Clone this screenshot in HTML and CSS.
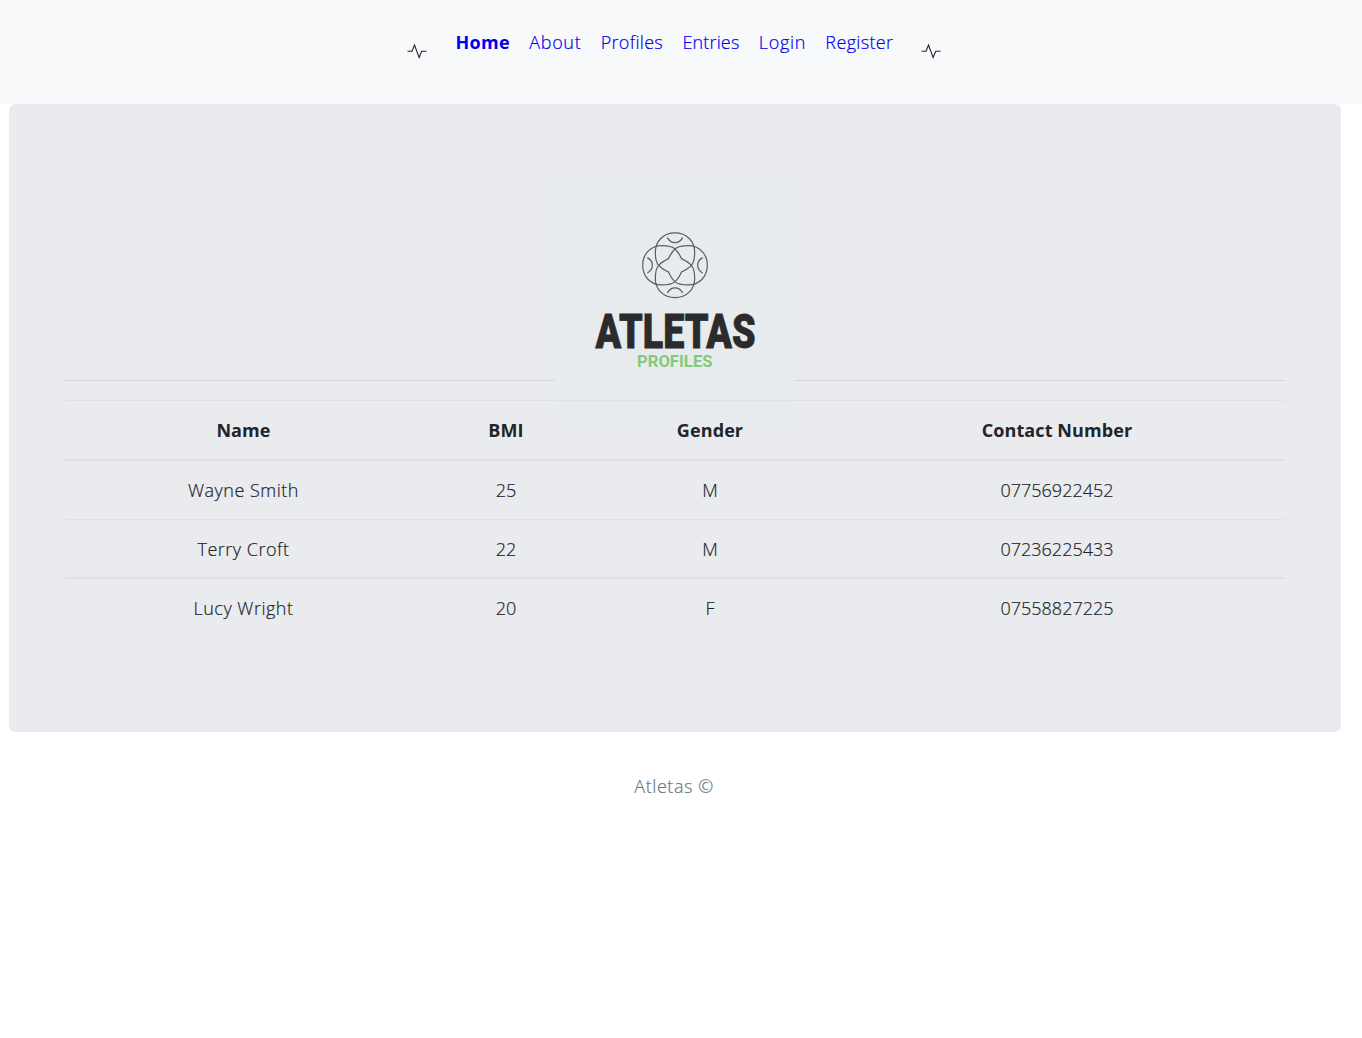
FILE: index.html
```html
<!DOCTYPE html>
<html lang="en">
<head>
<meta charset="utf-8">
<title>Atletas Profiles</title>
<link rel="stylesheet" href="styles.css">
</head>
<body>
<header class="navbar">
  <svg class="pulse" viewBox="0 0 20 18"><path d="M.5 9.3H5L7.5 3 12.1 15.5 14.7 9.3H19.5"/></svg>
  <nav class="links">
    <a class="active" href="#">Home</a>
    <a class="about" href="#">About</a>
    <a class="profiles" href="#">Profiles</a>
    <a class="entries" href="#">Entries</a>
    <a class="login" href="#">Login</a>
    <a class="register" href="#">Register</a>
  </nav>
  <svg class="pulse" viewBox="0 0 20 18"><path d="M.5 9.3H5L7.5 3 12.1 15.5 14.7 9.3H19.5"/></svg>
</header>
<main class="panel">
  <svg class="logo" viewBox="0 0 240 240">
    <defs>
      <g id="petal">
        <path d="M-97 0C-97-35-72-59-40-59C-20-59-8-57 0-49C10-40 14-32 20-19"/>
        <path d="M-97 0C-97 35-72 59-40 59C-20 59-8 57 0 49C10 40 14 32 20 19"/>
        <path d="M-83-23Q-68-15-68 0Q-68 15-83 23"/>
      </g>
    </defs>
    <g class="emblem" transform="translate(120 85.3) scale(.3333)">
      <use href="#petal"/>
      <use href="#petal" transform="rotate(90)"/>
      <use href="#petal" transform="rotate(180)"/>
      <use href="#petal" transform="rotate(270)"/>
    </g>
    <text class="brand" x="40.5" y="167.5" textLength="160" lengthAdjust="spacingAndGlyphs">ATLETAS</text>
    <text class="tagline" x="82" y="187" textLength="75.5" lengthAdjust="spacingAndGlyphs">PROFILES</text>
  </svg>
  <hr class="divider">
  <table class="profiles-table">
    <colgroup><col class="c-name"><col class="c-bmi"><col class="c-gender"><col class="c-phone"></colgroup>
    <thead>
      <tr><th>Name</th><th>BMI</th><th>Gender</th><th>Contact Number</th></tr>
    </thead>
    <tbody>
      <tr><td class="person">Wayne Smith</td><td>25</td><td>M</td><td>07756922452</td></tr>
      <tr><td class="person">Terry Croft</td><td>22</td><td>M</td><td>07236225433</td></tr>
      <tr><td class="person">Lucy Wright</td><td>20</td><td>F</td><td>07558827225</td></tr>
    </tbody>
  </table>
</main>
<footer class="footer">Atletas ©</footer>
</body>
</html>
```
FILE: styles.css
```css
* { box-sizing: border-box; }
body {
  margin: 0;
  background: #fff;
  color: #212529;
  font: 300 18px/28px "Open Sans", "Noto Sans", sans-serif;
  -webkit-text-stroke: .2px;
}
.navbar {
  display: flex;
  height: 104px;
  padding: 28px 0 0 407px;
  background: #f8f9fb;
}
.pulse {
  width: 20px;
  height: 18px;
  margin-top: 14px;
  fill: none;
  stroke: #212529;
  stroke-width: 1.1;
}
.links {
  display: flex;
  width: 438px;
  margin: 0 27.5px 0 28.5px;
  justify-content: space-between;
}
.links a { color: #0000ee; text-decoration: none; white-space: nowrap; }
.links .active { font-weight: 700; letter-spacing: .3px; }
.links .about { letter-spacing: .65px; }
.links .profiles { letter-spacing: .3px; }
.links .entries { letter-spacing: .15px; }
.links .login { letter-spacing: .65px; }
.links .register { letter-spacing: .35px; }
.links .active, .profiles-table th, .logo { -webkit-text-stroke: 0; }
.panel {
  width: 1332px;
  height: 628px;
  margin-left: 9px;
  padding: 76px 57px 0 56px;
  border-radius: 6px;
  background: #eaebef;
}
.logo {
  position: relative;
  z-index: 1;
  display: block;
  width: 240px;
  height: 240px;
  margin: 0 auto -40px;
  border-radius: 4px;
  background: #e8ebee;
  overflow: visible;
}
.emblem { fill: none; stroke: #5a5c5f; stroke-width: 3.6; }
.brand { font: 900 47.5px/1 Roboto, sans-serif; fill: #2b2b2b; stroke: #2b2b2b; stroke-width: .8; }
.tagline { font: 700 17px/1 Roboto, sans-serif; fill: #83c97c; }
.divider { height: 1px; margin: 0 0 19px; border: 0; background: #d3d4d8; }
.profiles-table {
  position: relative;
  z-index: 2;
  width: 100%;
  table-layout: fixed;
  border-spacing: 0;
  text-align: center;
}
.c-name { width: 357px; }
.c-bmi { width: 168px; }
.c-gender { width: 240px; }
.profiles-table th, .profiles-table td { padding: 0; border-top: 1px solid #dfe1e5; }
.profiles-table th { height: 61px; border-bottom: 2px solid #dfe1e5; font-weight: 700; letter-spacing: .1px; }
.profiles-table td { height: 58px; }
.profiles-table .person { letter-spacing: .5px; }
.profiles-table tbody tr:first-child td { border-top: 0; }
.profiles-table tbody tr:last-child td { height: 60px; border-top-width: 2px; }
.footer { width: 1348px; padding-top: 40px; text-align: center; color: #6c757d; letter-spacing: .55px; }
```
